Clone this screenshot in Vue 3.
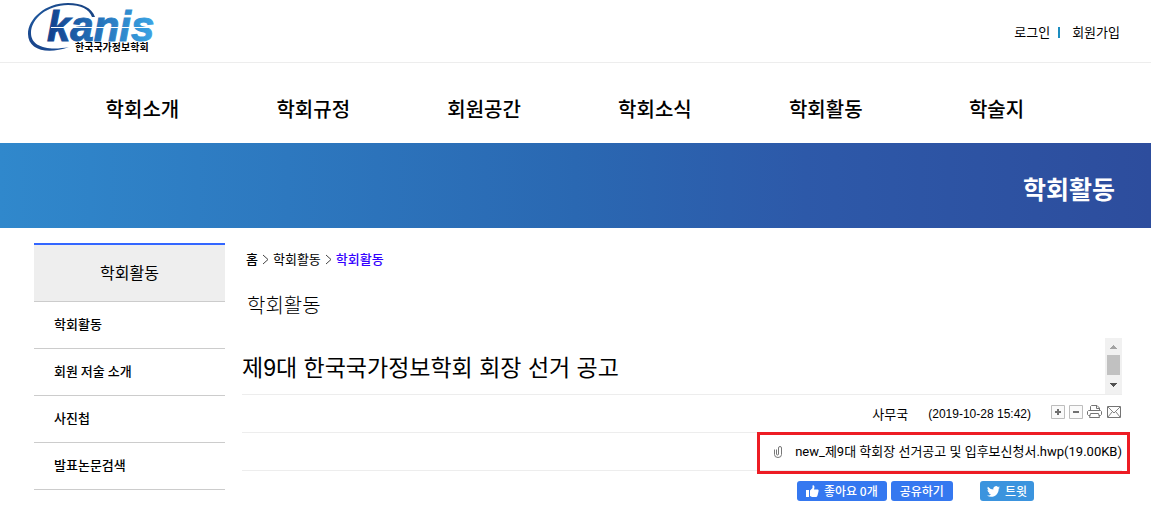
<script setup>
const nav = ['학회소개', '학회규정', '회원공간', '학회소식', '학회활동', '학술지']
const side = ['학회활동', '회원 저술 소개', '사진첩', '발표논문검색']
</script>

<template>
  <div class="page">
    <header class="top">
      <a href="#" class="logo" aria-label="kanis 한국국가정보학회">
        <svg width="136" height="56" viewBox="0 0 136 56">
          <defs>
            <linearGradient id="letters" x1="0" y1="0" x2="1" y2="0">
              <stop offset="0" stop-color="#12408c" />
              <stop offset="0.45" stop-color="#2470b8" />
              <stop offset="1" stop-color="#3ba4e4" />
            </linearGradient>
            <linearGradient id="ring" x1="1" y1="0" x2="0" y2="1">
              <stop offset="0" stop-color="#17407f" />
              <stop offset="0.6" stop-color="#1e569c" />
              <stop offset="1" stop-color="#173f86" />
            </linearGradient>
          </defs>
          <path
            d="M74 17C71 8 61 3 47 3C24 3 7 19 7 34C7 50 26 55 48 47C27 51 10 47 10 33C10 19 26 5 47 5C60 5 68 9 71 17Z"
            fill="url(#ring)"
          />
          <text class="mark" x="26" y="41" fill="url(#letters)" stroke="url(#letters)">kanis</text>
          <path d="M30 27.5H134" stroke="#fff" stroke-width="1" />
          <text class="submark" x="54" y="51">한국국가정보학회</text>
        </svg>
      </a>
      <div class="account">
        <a href="#">로그인</a><span class="bar"></span><a href="#">회원가입</a>
      </div>
    </header>

    <nav class="nav">
      <a v-for="n in nav" :key="n" href="#">{{ n }}</a>
    </nav>

    <div class="banner">학회활동</div>

    <div class="body">
      <aside class="side">
        <h2>학회활동</h2>
        <a v-for="s in side" :key="s" href="#">{{ s }}</a>
      </aside>

      <main class="main">
        <div class="crumbs">
          <a href="#" class="home">홈</a>
          <svg width="7" height="11" viewBox="0 0 7 11"><path d="M1 1L6 5.5L1 10" /></svg>
          <a href="#">학회활동</a>
          <svg width="7" height="11" viewBox="0 0 7 11"><path d="M1 1L6 5.5L1 10" /></svg>
          <a href="#" class="current">학회활동</a>
        </div>
        <h1>학회활동</h1>

        <div class="subject">
          <h3>제9대 한국국가정보학회 회장 선거 공고</h3>
          <svg class="scroll" width="17" height="56" viewBox="0 0 17 56" shape-rendering="crispEdges">
            <path d="M0 0H17V56H0Z" fill="#f1f1f1" />
            <path d="M8 7H9V8H10V9H11V10H12V11H5V10H6V9H7V8H8Z" fill="#a3a3a3" />
            <path d="M2 17H15V37H2Z" fill="#c1c1c1" />
            <path d="M5 45H12V46H11V47H10V48H9V49H8V48H7V47H6V46H5Z" fill="#505050" />
          </svg>
        </div>

        <div class="meta">
          <span>사무국</span>
          <span class="date">(2019-10-28 15:42)</span>
          <div class="tools">
            <button type="button" aria-label="글자 크게">
              <svg width="14" height="15" viewBox="0 0 14 15">
                <path d="M0.5 0.5H13.5V13.5H0.5Z" fill="#fafafa" stroke="#bdbdbd" />
                <path d="M4 7H10M7 4V10" stroke="#707070" stroke-width="2" />
              </svg>
            </button>
            <button type="button" aria-label="글자 작게">
              <svg width="14" height="15" viewBox="0 0 14 15">
                <path d="M0.5 0.5H13.5V13.5H0.5Z" fill="#fafafa" stroke="#bdbdbd" />
                <path d="M4 7H10" stroke="#707070" stroke-width="2" />
              </svg>
            </button>
            <button type="button" aria-label="인쇄">
              <svg width="16" height="15" viewBox="0 0 16 15" fill="none" stroke="#747474">
                <path d="M3.5 5.5V1.5L4.5 0.5H10L12.5 3V5.5M9.5 0.5V3.5H12.5" />
                <path d="M3.5 10.5H1.5L0.5 9.5V6.5L1.5 5.5H13.5L14.5 6.5V9.5L13.5 10.5H12" />
                <path d="M3.5 8.5H11.5L12.5 12.5H2.5Z" fill="#fff" />
              </svg>
            </button>
            <button type="button" aria-label="메일">
              <svg width="14" height="15" viewBox="0 0 14 15" fill="none" stroke="#747474">
                <path d="M0.5 1.5H13.5V12.5H0.5Z" fill="#fdfdfd" />
                <path d="M1 2L7 8L13 2M1 12L5 7M13 12L9 7" stroke-width="0.9" />
              </svg>
            </button>
          </div>
        </div>

        <div class="attach">
          <a href="#" class="file">
            <svg width="8" height="12" viewBox="0 0 8 12" fill="none" stroke="#777">
              <path d="M2.5 3.5V8Q2.5 9 3.5 9T4.5 8V2Q4.5 0.5 6 0.5T7.5 2V8.5Q7.5 11.5 4 11.5T0.5 8.5V3.5" />
            </svg>
            <span>new_제9대 학회장 선거공고 및 입후보신청서.hwp(19.00KB)</span>
          </a>
        </div>

        <div class="share">
          <button type="button" class="fb like">
            <svg width="13" height="12" viewBox="0 0 13 12" fill="#fff">
              <path d="M0 5H3V12H0ZM4 5.5L6.5 3V0.5Q7 0 8 0.5Q9 1.5 8 4.5H12Q13 5 12.5 6.5L11.5 10.5Q11 12 10 12H6L4 11Z" />
            </svg>
            좋아요 0개
          </button>
          <button type="button" class="fb">공유하기</button>
          <button type="button" class="tw">
            <svg width="13" height="11" viewBox="0 0 24 20" fill="#fff">
              <path d="M24 2.4a10 10 0 0 1-2.8.8A5 5 0 0 0 23.3.5a10 10 0 0 1-3.1 1.2A4.9 4.9 0 0 0 11.8 6.2 14 14 0 0 1 1.7 1a4.9 4.9 0 0 0 1.5 6.6 5 5 0 0 1-2.2-.6c0 2.3 1.6 4.4 3.9 4.9a5 5 0 0 1-2.2.1 4.9 4.9 0 0 0 4.6 3.4A10 10 0 0 1 0 17.5 14 14 0 0 0 7.5 19.7c9.1 0 14.3-7.7 14-14.6A10 10 0 0 0 24 2.4Z" />
            </svg>
            트윗
          </button>
        </div>
      </main>
    </div>
  </div>
</template>

<style>
body {
  background: #fff;
}
</style>

<style scoped>
.page {
  font-family: "Noto Sans CJK KR", sans-serif;
  font-size: 13px;
  line-height: 20px;
  color: #000;
}
a {
  color: inherit;
  text-decoration: none;
}
svg {
  display: block;
  flex: none;
}
h1, h2, h3 {
  margin: 0;
  font-weight: 400;
}
button {
  border: 0;
  padding: 0;
  background: none;
  font-family: inherit;
}
.top {
  display: flex;
  justify-content: space-between;
  height: 62px;
  border-bottom: 1px solid #ededed;
  padding: 0 31px 0 21px;
}
.mark {
  font-family: "Liberation Sans", sans-serif;
  font-size: 42px;
  font-weight: 700;
  font-style: italic;
  stroke-width: 1px;
}
.submark {
  font-size: 10px;
  font-weight: 700;
}
.account {
  display: flex;
  align-items: center;
  height: 64px;
}
.bar {
  width: 2px;
  height: 11px;
  margin: 0 12px 0 8px;
  background: #1c8dc0;
}
.nav {
  display: grid;
  grid-template-columns: repeat(6, 1fr);
  height: 80px;
  padding: 0 69px 0 57px;
  text-align: center;
  font-size: 20px;
  font-weight: 500;
  line-height: 92px;
}
.banner {
  height: 85px;
  padding-right: 36px;
  background: linear-gradient(90deg, #3088cc, #2a68b2 50%, #2d59a9 70%, #2d4d9d);
  color: #fff;
  text-align: right;
  font-size: 25px;
  font-weight: 700;
  line-height: 90px;
}
.body {
  display: flex;
  gap: 17px;
  padding: 15px 29px 0 34px;
}
.side {
  flex: none;
  width: 191px;
}
.side h2 {
  border-top: 2px solid #3366ff;
  border-bottom: 1px solid #ccc;
  padding-bottom: 2px;
  background: #eee;
  text-align: center;
  font-size: 16px;
  line-height: 54px;
}
.side a {
  display: block;
  border-bottom: 1px solid #ccc;
  padding: 0 0 2px 20px;
  font-weight: 500;
  line-height: 44px;
}
.main {
  flex: 1;
  min-width: 0;
}
.crumbs {
  display: flex;
  align-items: center;
  gap: 4px;
  padding: 6px 0 0 4px;
}
.crumbs path {
  fill: none;
  stroke: #444;
}
.home {
  font-weight: 500;
}
.current {
  color: #3300ff;
  font-weight: 500;
}
h1 {
  padding: 22px 0 19px 5px;
  font-size: 20px;
  font-weight: 300;
  line-height: 28px;
}
.subject {
  display: flex;
  justify-content: space-between;
  border-bottom: 1px solid #ededed;
}
.subject h3 {
  padding-top: 4px;
  font-family: "Liberation Sans", "Noto Sans CJK KR", sans-serif;
  font-size: 23px;
  line-height: 52px;
}
.meta {
  display: flex;
  justify-content: flex-end;
  align-items: center;
  height: 37px;
  border-bottom: 1px solid #ededed;
}
.date {
  margin: 0 20px;
  font-family: "Liberation Sans", sans-serif;
  font-size: 12px;
}
.tools {
  display: flex;
  gap: 4px;
  padding: 0 1px 2px 0;
}
.attach {
  display: flex;
  justify-content: flex-end;
  height: 37px;
  border-bottom: 1px solid #ededed;
}
.file {
  position: relative;
  display: flex;
  align-items: center;
  gap: 13px;
  font-family: Roboto, "Noto Sans CJK KR", sans-serif;
}
.file::after {
  content: "";
  position: absolute;
  inset: -1px -8px -4px -17px;
  border: 3px solid #ed1c24;
}
.share {
  display: flex;
  justify-content: flex-end;
  gap: 4px;
  padding: 10px 88px 0 0;
}
.share button {
  display: flex;
  align-items: center;
  gap: 5px;
  height: 20px;
  border-radius: 3px;
  padding: 0 9px;
  color: #fff;
  font-size: 12px;
  font-weight: 500;
  line-height: 20px;
}
.share .fb {
  background: #3578f0;
}
.share .tw {
  margin-left: 23px;
  padding: 0 7px;
  background: #3b94de;
}
</style>
